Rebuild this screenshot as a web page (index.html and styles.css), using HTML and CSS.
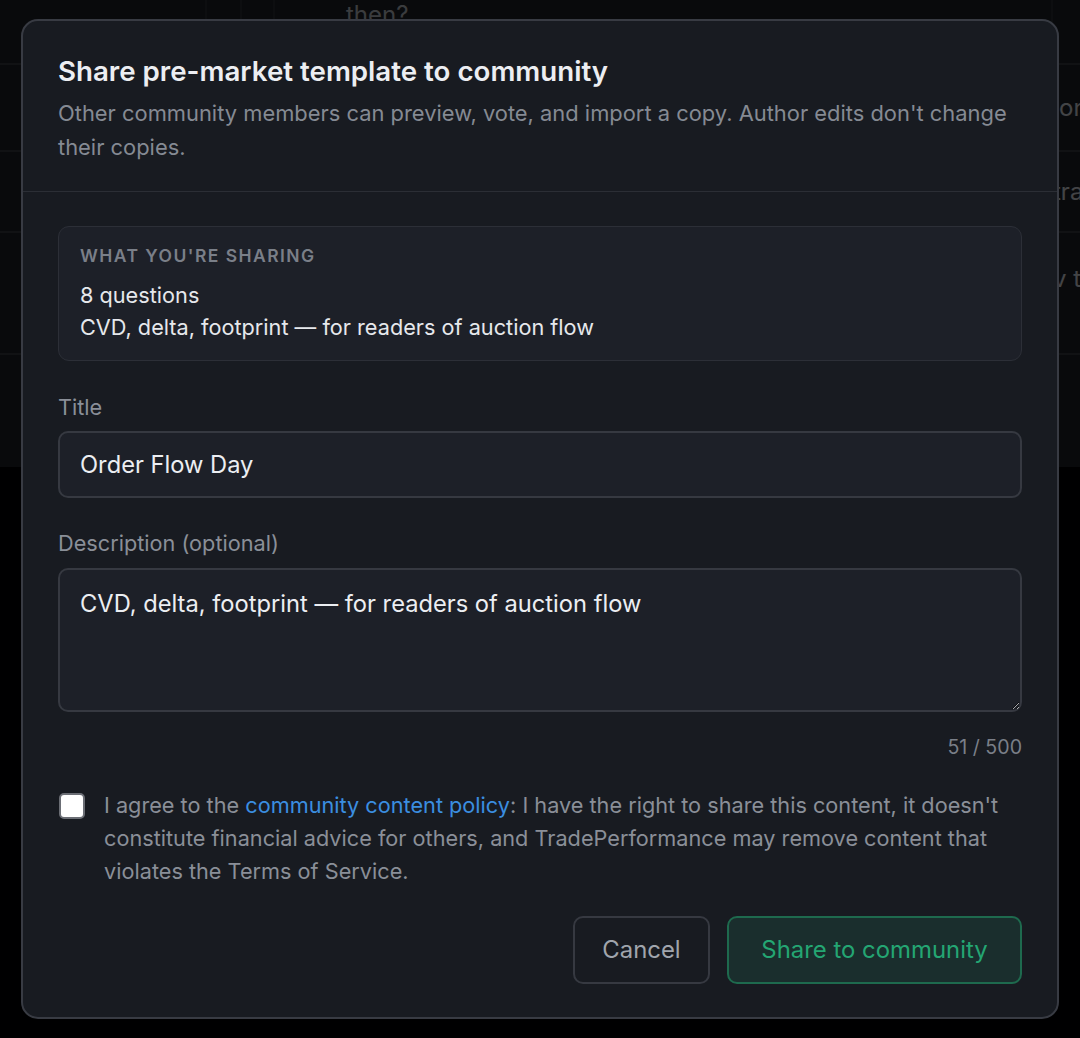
FILE: index.html
```html
<!DOCTYPE html>
<html lang="en">

<head>
    <meta charset="UTF-8">
    <meta name="viewport" content="width=device-width, initial-scale=1.0">
    <title>Share template</title>
    <link rel="stylesheet" href="styles.css">
</head>

<body>
    <!-- page content behind the modal -->
    <div class="board">
        <div class="board-row row-head">
            <div class="cell"></div>
            <div class="cell"></div>
            <div class="cell"></div>
            <div class="cell cell-text">then?</div>
            <div class="cell cell-edge"></div>
        </div>
        <div class="board-row row-a">
            <div class="cell"></div>
            <div class="cell"></div>
            <div class="cell"></div>
            <div class="cell"></div>
            <div class="cell cell-edge">on open</div>
        </div>
        <div class="board-row row-b">
            <div class="cell"></div>
            <div class="cell"></div>
            <div class="cell"></div>
            <div class="cell"></div>
            <div class="cell cell-edge cell-tight">trade</div>
        </div>
        <div class="board-row row-c">
            <div class="cell"></div>
            <div class="cell"></div>
            <div class="cell"></div>
            <div class="cell"></div>
            <div class="cell cell-edge cell-top">v today</div>
        </div>
        <div class="board-row row-d">
            <div class="cell"></div>
        </div>
    </div>

    <div class="overlay">
        <div class="modal">
            <div class="modal-header">
                <h2 class="modal-title">Share pre-market template to community</h2>
                <p class="modal-sub">Other community members can preview, vote, and import a copy. Author edits don't change their copies.</p>
            </div>

            <div class="modal-body">
                <div class="summary">
                    <div class="summary-label">What you're sharing</div>
                    <div class="summary-text">8 questions</div>
                    <div class="summary-text">CVD, delta, footprint — for readers of auction flow</div>
                </div>

                <label class="field-label" for="titleInput">Title</label>
                <input id="titleInput" class="field-input" type="text" value="Order Flow Day">

                <label class="field-label field-label-desc" for="descInput">Description (optional)</label>
                <textarea id="descInput" class="field-area">CVD, delta, footprint — for readers of auction flow</textarea>
                <div class="counter">51 / 500</div>

                <label class="agree">
                    <input class="agree-box" type="checkbox">
                    <span class="agree-text">I agree to the <a href="#" class="link">community content policy</a>: I have the right to share this content, it doesn't constitute financial advice for others, and TradePerformance may remove content that violates the Terms of Service.</span>
                </label>

                <div class="actions">
                    <button class="btn btn-cancel">Cancel</button>
                    <button class="btn btn-share">Share to community</button>
                </div>
            </div>
        </div>
    </div>
</body>

</html>
```

FILE: styles.css
```css
* {
    box-sizing: border-box;
}

html,
body {
    margin: 0;
    height: 100%;
}

body {
    background: #020304;
    font-family: Inter, "Noto Sans", sans-serif;
    overflow: hidden;
}

/* background board */
.board {
    background: #202329;
    width: 100%;
}

.board-row {
    display: grid;
    grid-template-columns: 207px 35px 33px 778px 1fr;
    border-bottom: 2px solid #3a3d44;
}

.row-head {
    height: 65px;
}

.row-a {
    height: 87px;
}

.row-b {
    height: 81px;
}

.row-c {
    height: 122px;
}

.row-d {
    height: 112px;
    display: block;
    border-bottom: none;
}

.cell {
    border-right: 2px solid #2e3137;
    color: #c4c8d0;
    font-size: 24px;
}

.cell-text {
    padding: 0 0 0 71px;
    margin-top: -5px;
    line-height: 40px;
}

.cell-edge {
    border-right: none;
    display: flex;
    align-items: center;
    white-space: nowrap;
    padding-left: 6px;
    color: #e0e4ec;
}

.cell-tight {
    padding-left: 0;
}

.cell-top {
    align-items: flex-start;
    padding-top: 31px;
    padding-left: 0;
}

.overlay {
    position: fixed;
    inset: 0;
    background: rgba(0, 0, 0, 0.7);
    display: flex;
    align-items: center;
    justify-content: center;
}

/* modal */
.modal {
    width: 1038px;
    background: #181b21;
    border: 2px solid #383b43;
    border-radius: 17px;
    margin-bottom: 1px;
}

.modal-header {
    padding: 34px 35px 27px;
    border-bottom: 1px solid #2b2e35;
}

.modal-title {
    margin: 0;
    font-size: 27.7px;
    line-height: 32px;
    font-weight: 600;
    color: #eceef2;
}

.modal-sub {
    margin: 9px 0 0;
    font-size: 21.9px;
    line-height: 34px;
    color: #858a93;
}

.modal-body {
    padding: 34px 35px 33px;
    display: flex;
    flex-direction: column;
}

.summary {
    background: #1d2028;
    border: 1px solid #2c2f37;
    border-radius: 11px;
    padding: 19px 21px 17px;
}

.summary-label {
    font-size: 17.5px;
    line-height: 20px;
    font-weight: 600;
    letter-spacing: 1.45px;
    text-transform: uppercase;
    color: #7a7f88;
    margin-bottom: 13px;
}

.summary-text {
    font-size: 21.7px;
    line-height: 32px;
    color: #e6e8ec;
}

.field-label {
    margin-top: 32px;
    margin-bottom: 10px;
    font-size: 21.7px;
    line-height: 28px;
    color: #8a8f98;
}

.field-label-desc {
    margin-top: 31px;
    margin-bottom: 11px;
}

.field-input,
.field-area {
    width: 100%;
    background: #1d2028;
    border: 2px solid #363941;
    border-radius: 10px;
    color: #eceef2;
    font-family: Inter, "Noto Sans", sans-serif;
    font-size: 23.7px;
    outline: none;
    color-scheme: dark;
}

.field-input {
    height: 67px;
    padding: 0 20px;
}

.field-area {
    height: 144px;
    padding: 18px 20px;
    line-height: 32px;
    resize: vertical;
}

.field-area + .counter {
    margin-top: 22px;
}

.counter {
    text-align: right;
    font-size: 19.6px;
    line-height: 26px;
    color: #7a7f88;
}

.agree {
    margin-top: 29px;
    display: flex;
    align-items: flex-start;
    gap: 19px;
}

.agree-box {
    appearance: none;
    flex: none;
    width: 26px;
    height: 26px;
    margin: 4px 0 0 1px;
    background: #ffffff;
    border: 2px solid #6b6e75;
    border-radius: 5px;
}

.agree-text {
    font-size: 21.7px;
    line-height: 33px;
    color: #8a8f98;
}

.link {
    color: #3b8ee0;
    text-decoration: none;
}

.actions {
    margin-top: 28px;
    display: flex;
    justify-content: flex-end;
    gap: 17px;
}

.btn {
    height: 68px;
    padding: 0 20px;
    border-radius: 10px;
    font-family: Inter, "Noto Sans", sans-serif;
    font-size: 23.9px;
    background: transparent;
}

.btn-cancel {
    width: 137px;
    border: 2px solid #363941;
    color: #a0a5ad;
}

.btn-share {
    width: 295px;
    background: #1a2e2d;
    border: 2px solid #1e6a4e;
    color: #24a673;
}
```
